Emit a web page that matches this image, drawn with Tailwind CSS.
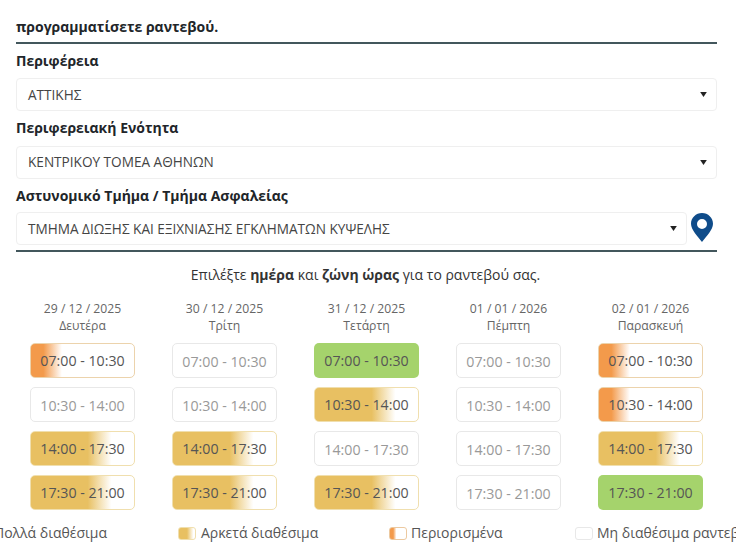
<!DOCTYPE html>
<html lang="el">
<head>
<meta charset="utf-8">
<script src="https://cdn.jsdelivr.net/npm/@tailwindcss/browser@4"></script>
</head>
<body class="bg-white overflow-hidden">
<div class="w-[736px] h-[552px] overflow-hidden font-['Open_Sans','Noto_Sans',sans-serif] text-[#212529]">
  <div class="ml-4 w-[701px]">
    <div class="pt-[17px] h-[44px] border-b-2 border-[#43575c] text-[14px] leading-[20px] font-bold">προγραμματίσετε ραντεβού.</div>

    <div class="mt-[7px] h-[22px] text-[14px] leading-[20px] font-bold">Περιφέρεια</div>
    <div class="mt-[5px] h-[33px] rounded-[4px] border border-[#efefef] flex items-center justify-between pl-[11px] pr-[9px] text-[13.600px] text-[#444]">
      <span class="pt-[1px]">ΑΤΤΙΚΗΣ</span>
      <svg width="7" height="5" viewBox="0 0 8 6"><path d="M0 0H8L4 6Z" fill="#222"/></svg>
    </div>

    <div class="mt-[7px] h-[22px] text-[14px] leading-[20px] font-bold">Περιφερειακή Ενότητα</div>
    <div class="mt-[6px] h-[33px] rounded-[4px] border border-[#efefef] flex items-center justify-between pl-[11px] pr-[9px] text-[13.600px] text-[#444]">
      <span>ΚΕΝΤΡΙΚΟΥ ΤΟΜΕΑ ΑΘΗΝΩΝ</span>
      <svg width="7" height="5" viewBox="0 0 8 6"><path d="M0 0H8L4 6Z" fill="#222"/></svg>
    </div>

    <div class="mt-[7px] h-[22px] text-[14px] leading-[20px] font-bold">Αστυνομικό Τμήμα / Τμήμα Ασφαλείας</div>
    <div class="mt-[4px] pb-[5px] border-b-2 border-[#43575c] flex items-start justify-between">
      <div class="w-[671px] h-[33px] rounded-[4px] border border-[#efefef] flex items-center justify-between pl-[11px] pr-[9px] text-[13.600px] text-[#444]">
        <span class="pt-[1px]">ΤΜΗΜΑ ΔΙΩΞΗΣ ΚΑΙ ΕΞΙΧΝΙΑΣΗΣ ΕΓΚΛΗΜΑΤΩΝ ΚΥΨΕΛΗΣ</span>
        <svg width="7" height="5" viewBox="0 0 8 6"><path d="M0 0H8L4 6Z" fill="#222"/></svg>
      </div>
      <svg class="mr-[4px] mt-[1px]" width="22" height="29" viewBox="0 0 22 29"><path fill="#0f4c8a" fill-rule="evenodd" d="M11 0C4.900 0 0 4.800 0 10.800c0 6 7 13.200 11 18.200 4-5 11-12.200 11-18.200C22 4.800 17.100 0 11 0Zm0 6a5 5 0 1 1 0 10 5 5 0 0 1 0-10Z"/></svg>
    </div>
  </div>

  <p class="mt-[13px] text-center text-[14px] leading-[20px] text-[#333] pr-[5px]">Επιλέξτε <b>ημέρα</b> και <b>ζώνη ώρας</b> για το ραντεβού σας.</p>

  <div class="mt-[15px] pl-[30px] flex gap-[37px] text-[12.200px] leading-[17px] text-center text-[#666]">
    <div class="w-[105px]">
      <div class="h-[36px]">29 / 12 / 2025<br>Δευτέρα</div>
      <div class="mt-[7px] flex flex-col gap-[9px] text-[14.200px] text-[#555]">
        <div class="h-[35px] rounded-[5px] border border-[#ecd3ac] bg-[linear-gradient(90deg,#f39a4b_12%,#fff_30%)] flex items-center justify-center">07:00 - 10:30</div>
        <div class="h-[35px] rounded-[5px] border border-[#e8e8e8] flex items-center justify-center text-[#999] pt-[2px]">10:30 - 14:00</div>
        <div class="h-[35px] rounded-[5px] border border-[#f0dfae] bg-[linear-gradient(90deg,#e8c062_55%,#fff_78%)] flex items-center justify-center">14:00 - 17:30</div>
        <div class="h-[35px] rounded-[5px] border border-[#f0dfae] bg-[linear-gradient(90deg,#e8c062_55%,#fff_78%)] flex items-center justify-center">17:30 - 21:00</div>
      </div>
    </div>
    <div class="w-[105px]">
      <div class="h-[36px]">30 / 12 / 2025<br>Τρίτη</div>
      <div class="mt-[7px] flex flex-col gap-[9px] text-[14.200px] text-[#555]">
        <div class="h-[35px] rounded-[5px] border border-[#e8e8e8] flex items-center justify-center text-[#999] pt-[2px]">07:00 - 10:30</div>
        <div class="h-[35px] rounded-[5px] border border-[#e8e8e8] flex items-center justify-center text-[#999] pt-[2px]">10:30 - 14:00</div>
        <div class="h-[35px] rounded-[5px] border border-[#f0dfae] bg-[linear-gradient(90deg,#e8c062_55%,#fff_78%)] flex items-center justify-center">14:00 - 17:30</div>
        <div class="h-[35px] rounded-[5px] border border-[#f0dfae] bg-[linear-gradient(90deg,#e8c062_55%,#fff_78%)] flex items-center justify-center">17:30 - 21:00</div>
      </div>
    </div>
    <div class="w-[105px]">
      <div class="h-[36px]">31 / 12 / 2025<br>Τετάρτη</div>
      <div class="mt-[7px] flex flex-col gap-[9px] text-[14.200px] text-[#555]">
        <div class="h-[35px] rounded-[5px] bg-[#a5d36c] flex items-center justify-center">07:00 - 10:30</div>
        <div class="h-[35px] rounded-[5px] border border-[#f0dfae] bg-[linear-gradient(90deg,#e8c062_55%,#fff_78%)] flex items-center justify-center">10:30 - 14:00</div>
        <div class="h-[35px] rounded-[5px] border border-[#e8e8e8] flex items-center justify-center text-[#999] pt-[2px]">14:00 - 17:30</div>
        <div class="h-[35px] rounded-[5px] border border-[#f0dfae] bg-[linear-gradient(90deg,#e8c062_55%,#fff_78%)] flex items-center justify-center">17:30 - 21:00</div>
      </div>
    </div>
    <div class="w-[105px]">
      <div class="h-[36px]">01 / 01 / 2026<br>Πέμπτη</div>
      <div class="mt-[7px] flex flex-col gap-[9px] text-[14.200px] text-[#999]">
        <div class="h-[35px] rounded-[5px] border border-[#e8e8e8] flex items-center justify-center pt-[2px]">07:00 - 10:30</div>
        <div class="h-[35px] rounded-[5px] border border-[#e8e8e8] flex items-center justify-center pt-[2px]">10:30 - 14:00</div>
        <div class="h-[35px] rounded-[5px] border border-[#e8e8e8] flex items-center justify-center pt-[2px]">14:00 - 17:30</div>
        <div class="h-[35px] rounded-[5px] border border-[#e8e8e8] flex items-center justify-center pt-[2px]">17:30 - 21:00</div>
      </div>
    </div>
    <div class="w-[105px]">
      <div class="h-[36px]">02 / 01 / 2026<br>Παρασκευή</div>
      <div class="mt-[7px] flex flex-col gap-[9px] text-[14.200px] text-[#555]">
        <div class="h-[35px] rounded-[5px] border border-[#ecd3ac] bg-[linear-gradient(90deg,#f39a4b_12%,#fff_30%)] flex items-center justify-center">07:00 - 10:30</div>
        <div class="h-[35px] rounded-[5px] border border-[#ecd3ac] bg-[linear-gradient(90deg,#f39a4b_12%,#fff_30%)] flex items-center justify-center">10:30 - 14:00</div>
        <div class="h-[35px] rounded-[5px] border border-[#f0dfae] bg-[linear-gradient(90deg,#e8c062_55%,#fff_78%)] flex items-center justify-center">14:00 - 17:30</div>
        <div class="h-[35px] rounded-[5px] bg-[#a5d36c] flex items-center justify-center">17:30 - 21:00</div>
      </div>
    </div>
  </div>

  <div class="mt-[13px] -ml-[6px] w-[800px] flex items-center text-[14px] leading-[20px] text-[#555] whitespace-nowrap">
    <span class="w-[184px]">Πολλά διαθέσιμα</span>
    <span class="w-[18px] h-[13px] rounded-[3px] bg-[linear-gradient(90deg,#e8c062_50%,#fff_90%)] border border-[#f0dfae]"></span>
    <span class="ml-[5px] w-[188px]">Αρκετά διαθέσιμα</span>
    <span class="w-[18px] h-[13px] rounded-[3px] bg-[linear-gradient(90deg,#f39a4b_20%,#fff_40%)] border border-[#ecc9a0]"></span>
    <span class="ml-[4px] w-[164px]">Περιορισμένα</span>
    <span class="w-[18px] h-[13px] rounded-[3px] border border-[#e8e8e8]"></span>
    <span class="ml-[4px]">Μη διαθέσιμα ραντεβού</span>
  </div>
</div>
</body>
</html>
